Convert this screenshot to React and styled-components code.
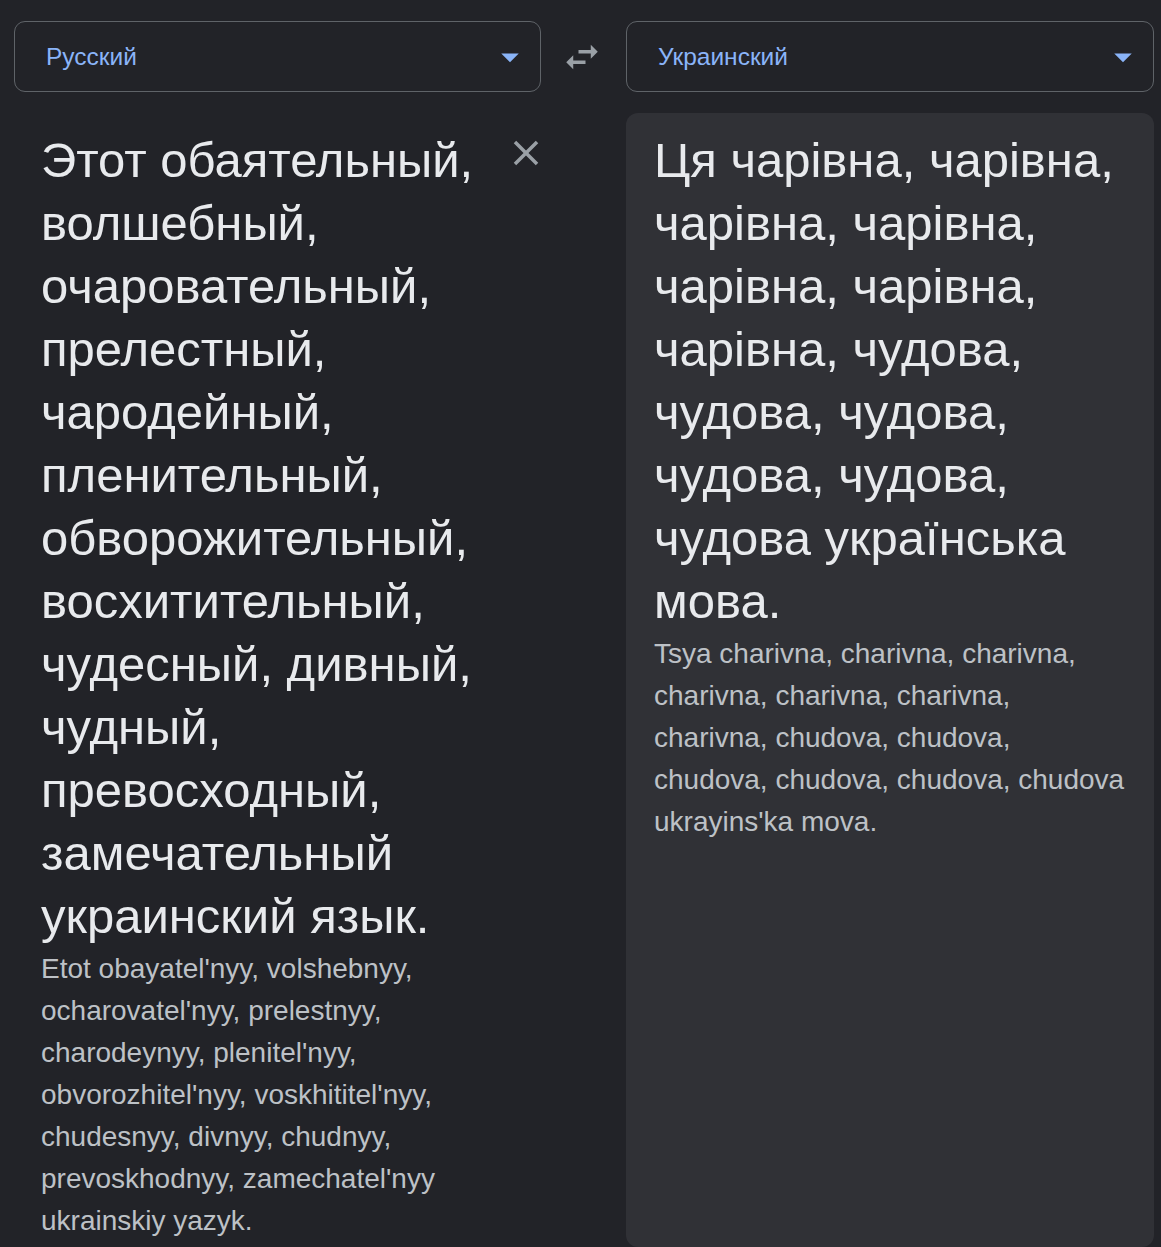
import { createGlobalStyle, styled } from 'styled-components'

const GlobalStyle = createGlobalStyle`
  html, body {
    margin: 0;
    padding: 0;
    background: #222328;
    overflow: hidden;
  }
  body {
    font-family: 'Liberation Sans', Arial, sans-serif;
  }
`

const sourceText =
  'Этот обаятельный, волшебный, очаровательный, прелестный, чародейный, пленительный, обворожительный, восхитительный, чудесный, дивный, чудный, превосходный, замечательный украинский язык.'
const sourceTranslit =
  "Etot obayatel'nyy, volshebnyy, ocharovatel'nyy, prelestnyy, charodeynyy, plenitel'nyy, obvorozhitel'nyy, voskhititel'nyy, chudesnyy, divnyy, chudnyy, prevoskhodnyy, zamechatel'nyy ukrainskiy yazyk."
const targetText =
  'Ця чарівна, чарівна, чарівна, чарівна, чарівна, чарівна, чарівна, чудова, чудова, чудова, чудова, чудова, чудова українська мова.'
const targetTranslit =
  "Tsya charivna, charivna, charivna, charivna, charivna, charivna, charivna, chudova, chudova, chudova, chudova, chudova, chudova ukrayins'ka mova."

const DropIcon = () => (
  <svg width="42" height="42" viewBox="0 0 24 24" fill="#8ab4f8">
    <path d="M7 10l5 5 5-5z" />
  </svg>
)

const SwapIcon = () => (
  <svg width="42" height="42" viewBox="0 0 24 24" fill="#9aa0a6">
    <path d="M6.99 11L3 15l3.99 4v-3H14v-2H6.99v-3zM21 9l-3.99-4v3H10v2h7.01v3L21 9z" />
  </svg>
)

const CloseIcon = () => (
  <svg width="42" height="42" viewBox="0 0 24 24" fill="#9aa0a6">
    <path d="M19 6.41L17.59 5 12 10.59 6.41 5 5 6.41 10.59 12 5 17.59 6.41 19 12 13.41 17.59 19 19 17.59 13.41 12z" />
  </svg>
)

const LanguageSelect = ({ label }) => (
  <Select>
    <SelectLabel>{label}</SelectLabel>
    <DropIcon />
  </Select>
)

export default function App() {
  return (
    <>
      <GlobalStyle />
      <Page>
        <LanguageSelect label="Русский" />
        <SwapButton>
          <SwapIcon />
        </SwapButton>
        <LanguageSelect label="Украинский" />

        <SourcePane>
          <TextBlock>
            <MainText>{sourceText}</MainText>
            <Translit $width={440}>{sourceTranslit}</Translit>
          </TextBlock>
          <ClearButton>
            <CloseIcon />
          </ClearButton>
        </SourcePane>
        <div />
        <TargetPane>
          <TextBlock>
            <MainText>{targetText}</MainText>
            <Translit $width={473}>{targetTranslit}</Translit>
          </TextBlock>
        </TargetPane>
      </Page>
    </>
  )
}

const Page = styled.div`
  display: grid;
  grid-template-columns: 527px 85px 528px;
  grid-template-rows: 71px auto;
  row-gap: 21px;
  padding: 21px 7px 0 14px;
  min-height: 1247px;
  box-sizing: border-box;
`

const Select = styled.div`
  display: flex;
  align-items: center;
  justify-content: space-between;
  border: 1px solid #5f6368;
  border-radius: 11px;
  padding: 0 9px 0 31px;
  box-sizing: border-box;
  height: 71px;
`

const SelectLabel = styled.span`
  color: #8ab4f8;
  font-size: 24.5px;
`

const SwapButton = styled.div`
  display: flex;
  align-items: center;
  justify-content: center;
  padding-right: 4px;
`

const SourcePane = styled.div`
  display: flex;
  align-items: flex-start;
  padding: 16px 0 0 27px;
`

const TargetPane = styled.div`
  display: flex;
  background: #303136;
  border-radius: 12px;
  padding: 16px 14px 0 28px;
`

const TextBlock = styled.div`
  flex: 1;
  min-width: 0;
`

const MainText = styled.div`
  color: #e8eaed;
  font-size: 49px;
  line-height: 63px;
  max-width: 480px;
`

const Translit = styled.div`
  color: #bdc1c6;
  font-size: 28px;
  line-height: 42px;
  max-width: ${({ $width }) => $width}px;
`

const ClearButton = styled.div`
  display: flex;
  align-items: center;
  justify-content: center;
  width: 42px;
  height: 42px;
  margin: 3px -6px 0 5px;
`
